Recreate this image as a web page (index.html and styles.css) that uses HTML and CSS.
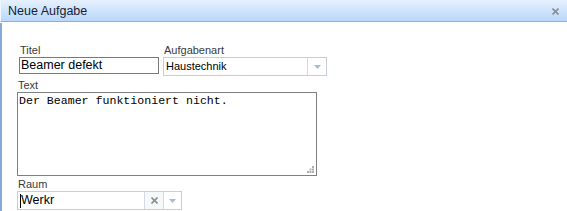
FILE: index.html
```html
<!DOCTYPE html>
<html lang="de">
<head>
<meta charset="utf-8">
<title>Neue Aufgabe</title>
<link rel="stylesheet" href="styles.css">
</head>
<body>
<div class="window">
  <div class="titlebar">
    <span class="title">Neue Aufgabe</span>
    <span class="close">
      <svg width="7" height="7" viewBox="0 0 7 7"><path d="M0.5 0.5 L6.5 6.5 M6.5 0.5 L0.5 6.5" stroke="#8a8f96" stroke-width="1.6"/></svg>
    </span>
  </div>
  <div class="content">
    <div class="row">
      <div class="field">
        <label class="label">Titel</label>
        <div class="input title-input">Beamer defekt</div>
      </div>
      <div class="field">
        <label class="label">Aufgabenart</label>
        <div class="select">
          <span class="select-value">Haustechnik</span>
          <span class="trigger">
            <svg width="7" height="4" viewBox="0 0 7 4"><path d="M0 0 H7 L3.5 4 Z" fill="#a9bbd0"/></svg>
          </span>
        </div>
      </div>
    </div>
    <div class="field">
      <label class="label text-label">Text</label>
      <div class="textarea">Der Beamer funktioniert nicht.
        <svg class="grip" width="7" height="7" viewBox="0 0 7 7">
          <rect x="5" y="0" width="2" height="2" fill="#b0b0b0"/>
          <rect x="2.5" y="2.5" width="2" height="2" fill="#b0b0b0"/>
          <rect x="5" y="2.5" width="2" height="2" fill="#b0b0b0"/>
          <rect x="0" y="5" width="2" height="2" fill="#b0b0b0"/>
          <rect x="2.5" y="5" width="2" height="2" fill="#b0b0b0"/>
          <rect x="5" y="5" width="2" height="2" fill="#b0b0b0"/>
        </svg>
      </div>
    </div>
    <div class="field">
      <label class="label raum-label">Raum</label>
      <div class="combo">
        <div class="combo-input"><span class="caret"></span>Werkr</div>
        <span class="clear">
          <svg width="7" height="7" viewBox="0 0 7 7"><path d="M0.5 0.5 L6.5 6.5 M6.5 0.5 L0.5 6.5" stroke="#8a8f96" stroke-width="1.6"/></svg>
        </span>
        <span class="trigger combo-trigger">
          <svg width="7" height="4" viewBox="0 0 7 4"><path d="M0 0 H7 L3.5 4 Z" fill="#a9bbd0"/></svg>
        </span>
      </div>
    </div>
  </div>
</div>
</body>
</html>
```
FILE: styles.css
```css
html, body {
  margin: 0;
  padding: 0;
  background: #ffffff;
}
body {
  width: 567px;
  height: 211px;
  overflow: hidden;
  font-family: "Liberation Sans", Arial, sans-serif;
  color: #222;
}
.window {
  height: 211px;
  border-left: 2px solid #84abd8;
  box-sizing: border-box;
}
.titlebar {
  height: 21px;
  background: linear-gradient(to bottom, #e6f1fe 0%, #cfe4fc 50%, #b9d7fa 100%);
  border-bottom: 1px solid #8fb1d8;
  box-shadow: 0 1px 0 #ffffff;
  display: flex;
  align-items: center;
  justify-content: space-between;
  padding: 0 8px 0 7px;
  margin-left: -2px;
  border-left: 1px solid #f0f7ff;
}
.title {
  font-size: 12.5px;
  color: #15233a;
  padding-top: 1px;
}
.close {
  display: flex;
  margin-top: 2px;
}
.content {
  padding: 22px 0 0 15px;
  display: flex;
  flex-direction: column;
}
.row {
  display: flex;
  gap: 4px;
  padding-left: 2px;
}
.field {
  display: flex;
  flex-direction: column;
}
.label {
  font-size: 11px;
  line-height: 13px;
  color: #3a3a3a;
  padding-left: 1px;
}
.text-label {
  margin-top: 3px;
}
.raum-label {
  margin-top: 2px;
}
.input {
  box-sizing: border-box;
  border: 1px solid #7a7a7a;
  font-size: 12.5px;
  line-height: 15px;
  padding-left: 1px;
  color: #000;
}
.title-input {
  width: 140px;
  height: 17px;
}
.select {
  box-sizing: border-box;
  width: 164px;
  height: 19px;
  border: 1px solid #c6ced8;
  display: flex;
  align-items: stretch;
}
.select-value {
  flex: 1;
  font-size: 11px;
  line-height: 17px;
  padding-left: 2px;
  color: #000;
}
.trigger {
  width: 18px;
  border-left: 1px solid #d3dae3;
  display: flex;
  align-items: center;
  justify-content: center;
}
.textarea {
  position: relative;
  box-sizing: border-box;
  width: 300px;
  height: 84px;
  border: 1px solid #808080;
  font-family: "Liberation Mono", "Courier New", monospace;
  font-size: 11.6px;
  line-height: 13px;
  padding: 1px 1px;
  color: #000;
  white-space: pre-line;
}
.grip {
  position: absolute;
  right: 2px;
  bottom: 2px;
}
.combo {
  box-sizing: border-box;
  width: 165px;
  height: 19px;
  border: 1px solid #c6ced8;
  display: flex;
  align-items: stretch;
}
.combo-input {
  flex: 1;
  font-size: 12.5px;
  line-height: 17px;
  padding-left: 2px;
  color: #000;
  display: flex;
  align-items: center;
}
.caret {
  width: 1px;
  height: 14px;
  background: #000;
}
.clear {
  width: 18px;
  border-left: 1px solid #d3dae3;
  display: flex;
  align-items: center;
  justify-content: center;
  background: #f7f8fa;
}
.combo-trigger {
  width: 17px;
}
```
